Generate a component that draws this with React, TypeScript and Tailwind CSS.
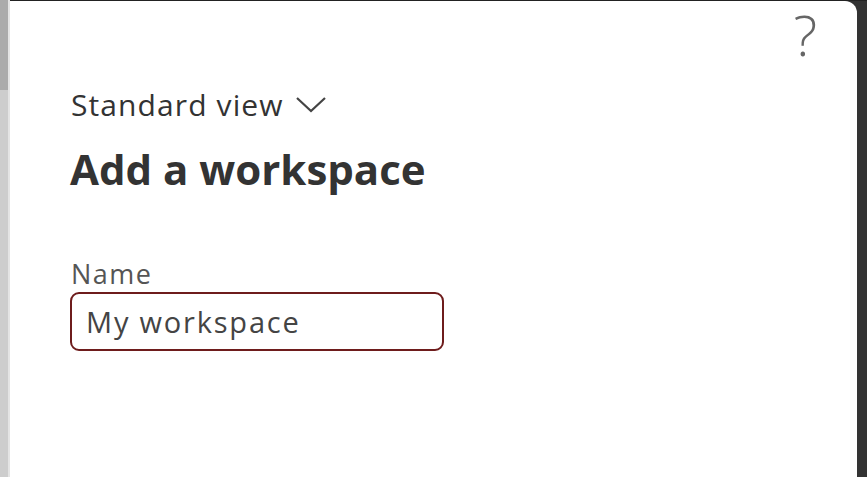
import React from "react";

export default function App() {
  return (
    <div className="w-[867px] h-[477px] flex bg-[#333333] overflow-hidden" style={{ fontFamily: '"Open Sans", "Noto Sans", sans-serif' }}>
      <div className="w-[8px] flex flex-col shrink-0">
        <div className="h-[90px] bg-[#ababab]" />
        <div className="flex-1 bg-[#cdcdcd]" />
      </div>
      <div className="w-[2px] bg-[#e4e4e4] shrink-0" />
      <div className="flex-1 flex flex-col">
        <div className="h-[1px] bg-[#222]" />
        <div className="flex-1 bg-white rounded-tr-[12px] mr-[10px] relative pl-[61px]">
          <div className="absolute right-[40px] top-[1px] text-[56px] leading-[64px] font-light text-[#666]">?</div>
          <div className="mt-[84px] flex items-center gap-[11px] text-[30px] tracking-[1.1px] text-[#333] leading-[40px]">
            <span>Standard view</span>
            <svg width="32" height="18" viewBox="0 0 32 18" fill="none" stroke="#444" strokeWidth="2.2">
              <path d="M2 2 L16 15 L30 2" />
            </svg>
          </div>
          <div className="mt-[16px] -ml-[1px] text-[42px] font-bold text-[#333] leading-[56px]">Add a workspace</div>
          <div className="mt-[59px] text-[27px] tracking-[1.5px] text-[#555] leading-[36px]">Name</div>
          <div className="w-[374px] h-[59px] -ml-[1px] border-2 border-[#6e1c1c] rounded-[9px] flex items-center px-[14px] text-[29px] tracking-[1.8px] text-[#444] leading-[40px]">
            My workspace
          </div>
        </div>
      </div>
    </div>
  );
}
